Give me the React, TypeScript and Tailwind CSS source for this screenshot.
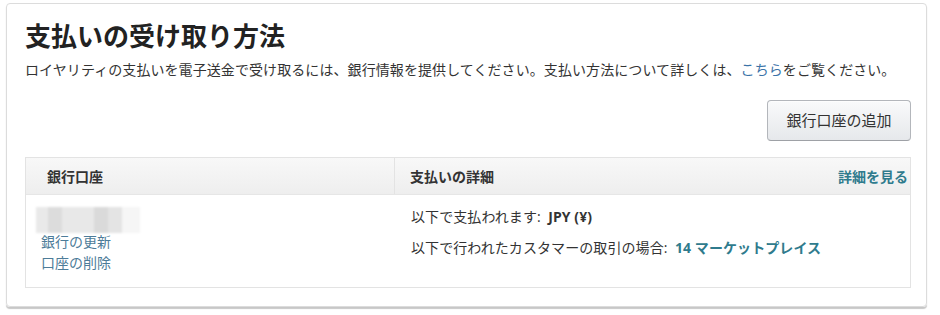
import React from "react";

export default function App() {
  return (
    <div
      className="w-[940px] h-[315px] bg-white pl-[6px] pt-[3px]"
      style={{ fontFamily: '"Open Sans", "Noto Sans CJK JP", sans-serif' }}
    >
      <div className="w-[921px] h-[304px] border border-[#dcdcdc] rounded-[4px] shadow-[0_2px_1px_rgba(0,0,0,0.22)] pl-[18px] pr-[15px] pt-[18px] flex flex-col">
        <h1 className="text-[26px] leading-[28px] font-bold text-[#222]">支払いの受け取り方法</h1>
        <p className="mt-[10px] text-[14px] leading-[20px] text-[#333] whitespace-nowrap tracking-[0.08px]">
          ロイヤリティの支払いを電子送金で受け取るには、銀行情報を提供してください。支払い方法について詳しくは、
          <span className="text-[#3b73a8]">こちら</span>をご覧ください。
        </p>
        <div className="mt-[20px] flex justify-end">
          <button className="w-[144px] h-[41px] rounded-[4px] border border-[#b3b6bb] border-b-[#9ea1a6] bg-gradient-to-b from-[#f9fafb] to-[#e6e8eb] text-[15px] text-[#333] shadow-[0_1px_0_rgba(255,255,255,0.6)_inset]">
            銀行口座の追加
          </button>
        </div>
        <div className="mt-[16px] border border-[#e3e3e3] flex flex-col h-[131px]">
          <div className="h-[37px] flex bg-gradient-to-b from-[#f8f8f8] to-[#eeeeee] border-b border-[#e6e6e6] text-[14px] font-bold text-[#333]">
            <div className="w-[369px] border-r border-[#e3e3e3] flex items-center pl-[21px]">銀行口座</div>
            <div className="flex-1 flex items-center justify-between pl-[15px] pr-[2px]">
              <span>支払いの詳細</span>
              <span className="text-[#2f7b8d]">詳細を見る</span>
            </div>
          </div>
          <div className="flex flex-1 text-[14px] text-[#333]">
            <div className="w-[369px] pl-[10px] pt-[12px] flex flex-col">
              <div className="flex h-[26px] w-[104px] blur-[1px]">
                <div className="w-[12px] bg-[#e9e9e9]" />
                <div className="w-[14px] bg-[#dcdcdc]" />
                <div className="w-[32px] bg-[#e8e8e8]" />
                <div className="w-[14px] bg-[#dadada]" />
                <div className="w-[14px] bg-[#e4e4e4]" />
                <div className="w-[18px] bg-[#f6f6f6]" />
              </div>
              <div className="pl-[5px] text-[#4d7c99] leading-[21px] mt-[-2px]">
                <div>銀行の更新</div>
                <div>口座の削除</div>
              </div>
            </div>
            <div className="flex-1 pl-[16px] pt-[12px] leading-[20px] tracking-[0.08px]">
              <div>
                以下で支払われます:&nbsp;&nbsp;<span className="font-bold">JPY (¥)</span>
              </div>
              <div className="mt-[11px]">
                以下で行われたカスタマーの取引の場合:&nbsp;&nbsp;<span className="font-bold text-[#2f7b8d]">14 マーケットプレイス</span>
              </div>
            </div>
          </div>
        </div>
      </div>
    </div>
  );
}
